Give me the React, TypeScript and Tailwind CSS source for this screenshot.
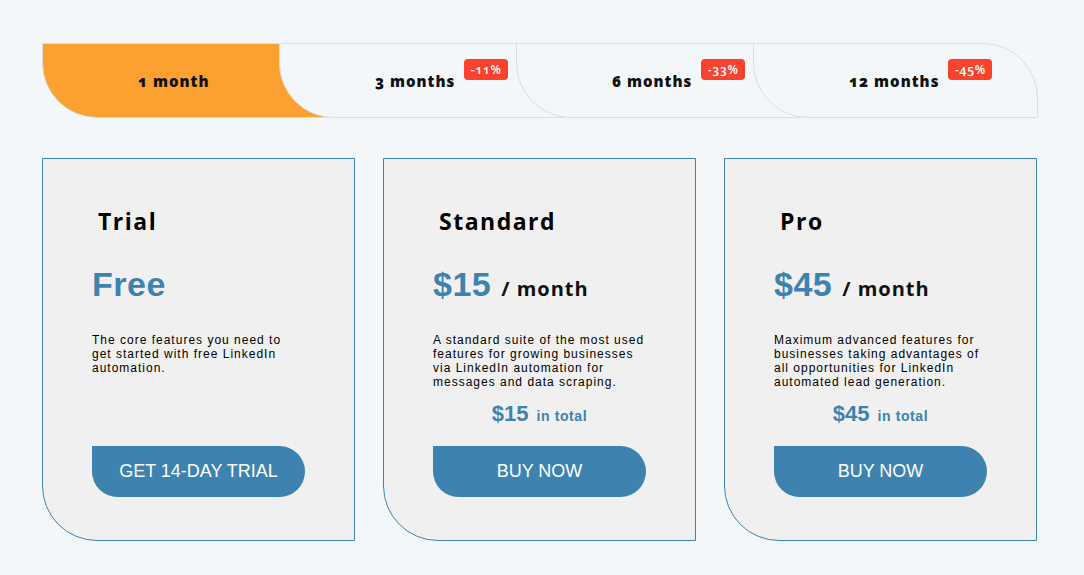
const tabs = [
  { label: "1 month", badge: null },
  { label: "3 months", badge: "-11%" },
  { label: "6 months", badge: "-33%" },
  { label: "12 months", badge: "-45%" },
];

const plans = [
  {
    name: "Trial",
    price: "Free",
    perMonth: false,
    lines: ["The core features you need to", "get started with free LinkedIn", "automation."],
    total: null,
    cta: "GET 14-DAY TRIAL",
  },
  {
    name: "Standard",
    price: "$15",
    perMonth: true,
    lines: [
      "A standard suite of the most used",
      "features for growing businesses",
      "via LinkedIn automation for",
      "messages and data scraping.",
    ],
    total: "$15",
    cta: "BUY NOW",
  },
  {
    name: "Pro",
    price: "$45",
    perMonth: true,
    lines: [
      "Maximum advanced features for",
      "businesses taking advantages of",
      "all opportunities for LinkedIn",
      "automated lead generation.",
    ],
    total: "$45",
    cta: "BUY NOW",
  },
];

const heading = { fontFamily: '"Open Sans", "Noto Sans", sans-serif' };
const arial = { fontFamily: '"Liberation Sans", Arial, sans-serif' };

export default function App() {
  return (
    <div className="min-h-[575px] w-[1084px] bg-[#f4f7fa] pl-[42px] pt-[43px]">
      {/* period tabs */}
      <div className="flex">
        {tabs.map((t, i) => (
          <div
            key={t.label}
            className={
              "relative flex h-[75px] w-[285px] shrink-0 items-center border border-[#dcdde0] pl-[95px] pt-[2px] rounded-bl-[55px] " +
              (i === 0 ? "z-0 bg-[#fca130] " : "-ml-[48px] bg-[#f4f7fa] ") +
              (i === 1 ? "z-10 " : "") +
              (i === 2 ? "z-20 " : "") +
              (i === 3 ? "z-30 rounded-tr-[55px] " : "")
            }
          >
            <span
              style={heading}
              className="text-[15px] font-extrabold tracking-[1px] text-[#111] oldstyle-nums"
            >
              {t.label}
            </span>
            {t.badge && (
              <span
                style={heading}
                className="relative -top-[12px] ml-[9px] flex h-[21px] w-[44px] items-center justify-center rounded-[4px] bg-[#f9432f] text-[12px] font-semibold tracking-[0.8px] text-white oldstyle-nums"
              >
                {t.badge}
              </span>
            )}
          </div>
        ))}
      </div>

      {/* plan cards */}
      <div className="mt-[40px] flex gap-[28px]">
        {plans.map((p) => (
          <div
            key={p.name}
            className="flex h-[383px] w-[313px] flex-col rounded-bl-[55px] border border-[#3e82b0] bg-[#f0f0f0] px-[49px] pt-[46px] pb-[43px]"
          >
            <div style={heading} className="ml-[6px] text-[23px] leading-8 font-bold tracking-[1.5px] text-black">
              {p.name}
            </div>
            <div className="mt-[30px] flex h-[34px] items-baseline leading-[34px]">
              <span style={arial} className="text-[34px] font-bold tracking-[0.5px] text-[#3e82b0]">
                {p.price}
              </span>
              {p.perMonth && (
                <span style={heading} className="ml-[10px] text-[20px] leading-[34px] font-bold tracking-[1px] text-[#111]">
                  / month
                </span>
              )}
            </div>
            <div style={arial} className="mt-[32px] text-[12px] leading-[14px] tracking-[1px] whitespace-nowrap text-black">
              {p.lines.map((l) => (
                <div key={l}>{l}</div>
              ))}
            </div>
            {p.total && (
              <div style={arial} className="mt-[13px] flex h-[24px] items-baseline justify-center leading-6 font-bold text-[#3e82b0]">
                <span className="text-[22px]">{p.total}</span>
                <span className="ml-[8px] text-[14px] tracking-[0.6px]">in total</span>
              </div>
            )}
            <button
              style={arial}
              className="mt-auto h-[51px] w-[213px] rounded-tr-[26px] rounded-br-[26px] rounded-bl-[26px] bg-[#3e82b0] text-[18px] text-white"
            >
              {p.cta}
            </button>
          </div>
        ))}
      </div>
    </div>
  );
}
